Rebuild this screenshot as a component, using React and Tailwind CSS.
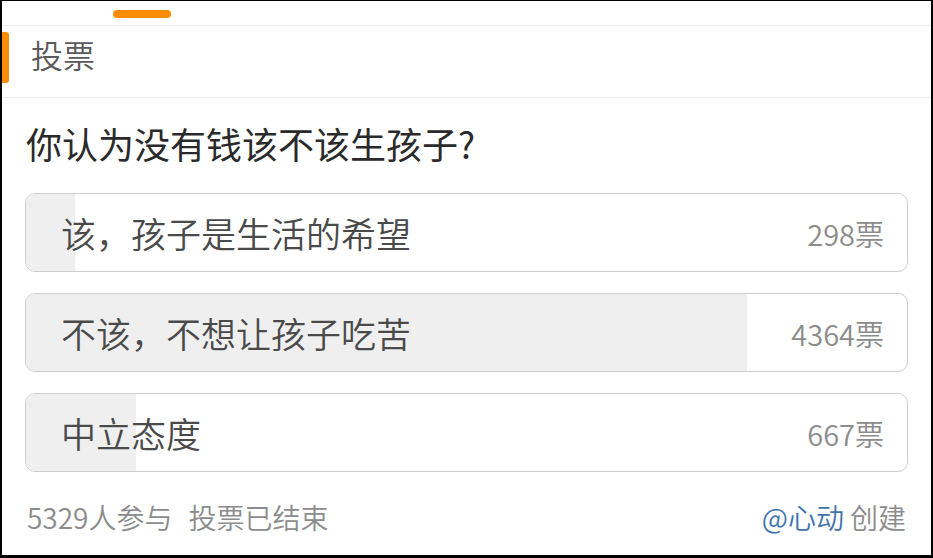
import React from "react";

const options = [
    { label: "该，孩子是生活的希望", votes: 298 },
    { label: "不该，不想让孩子吃苦", votes: 4364 },
    { label: "中立态度", votes: 667 },
];

const total = 5329;

function OptionRow({ label, votes }) {
    return (
        <div className="relative flex items-center justify-between h-[79px] rounded-[10px] border border-[#cdcdcd] overflow-hidden bg-white">
            {/* vote share fill */}
            <div className="absolute inset-y-0 left-0 bg-[#efefef]" style={{ width: `${(votes / total) * 100}%` }} />
            <span className="relative pl-[35px] text-[35px] leading-[40px] text-[#4a4a4a]">{label}</span>
            <span className="relative pr-[23px] text-[29px] leading-[32px] text-[#8c8c8c]">{votes}票</span>
        </div>
    );
}

export default function App() {
    return (
        <div
            className="w-[933px] h-[558px] bg-white border-l-2 border-t border-r-2 border-b-[3px] border-black flex flex-col overflow-hidden font-[350]"
            style={{ fontFamily: '"Noto Sans CJK SC", "Noto Sans", sans-serif' }}
        >
            {/* tab indicator strip */}
            <div className="h-[25px] border-b border-[#ececec] shrink-0">
                <div className="ml-[111px] mt-[9px] w-[58px] h-[8px] rounded-full bg-[#fb8c00]" />
            </div>

            {/* header */}
            <div className="h-[72px] flex items-start border-b border-[#ececec] shrink-0">
                <div className="mt-[6px] w-[7px] h-[51px] rounded-r-[3px] bg-[#fb8c00]" />
                <span className="ml-[22px] mt-[4px] text-[32px] leading-[48px] text-[#5a5a5a]">投票</span>
            </div>

            {/* question */}
            <div className="pt-[27px] px-[24px] text-[36px] leading-[36px] font-normal text-[#2a2a2a]">
                你认为没有钱该不该生孩子?
            </div>

            {/* options */}
            <div className="mt-[32px] px-[23px] flex flex-col gap-[21px]">
                {options.map((o) => (
                    <OptionRow key={o.label} label={o.label} votes={o.votes} />
                ))}
            </div>

            {/* footer */}
            <div className="mt-[31px] px-[25px] flex items-center justify-between text-[28px] leading-[28px] text-[#8c8c8c]">
                <div>
                    5329人参与<span className="ml-[16px]">投票已结束</span>
                </div>
                <div>
                    <span className="text-[#3f73ad]">@心动</span>
                    <span className="ml-[6px]">创建</span>
                </div>
            </div>
        </div>
    );
}
